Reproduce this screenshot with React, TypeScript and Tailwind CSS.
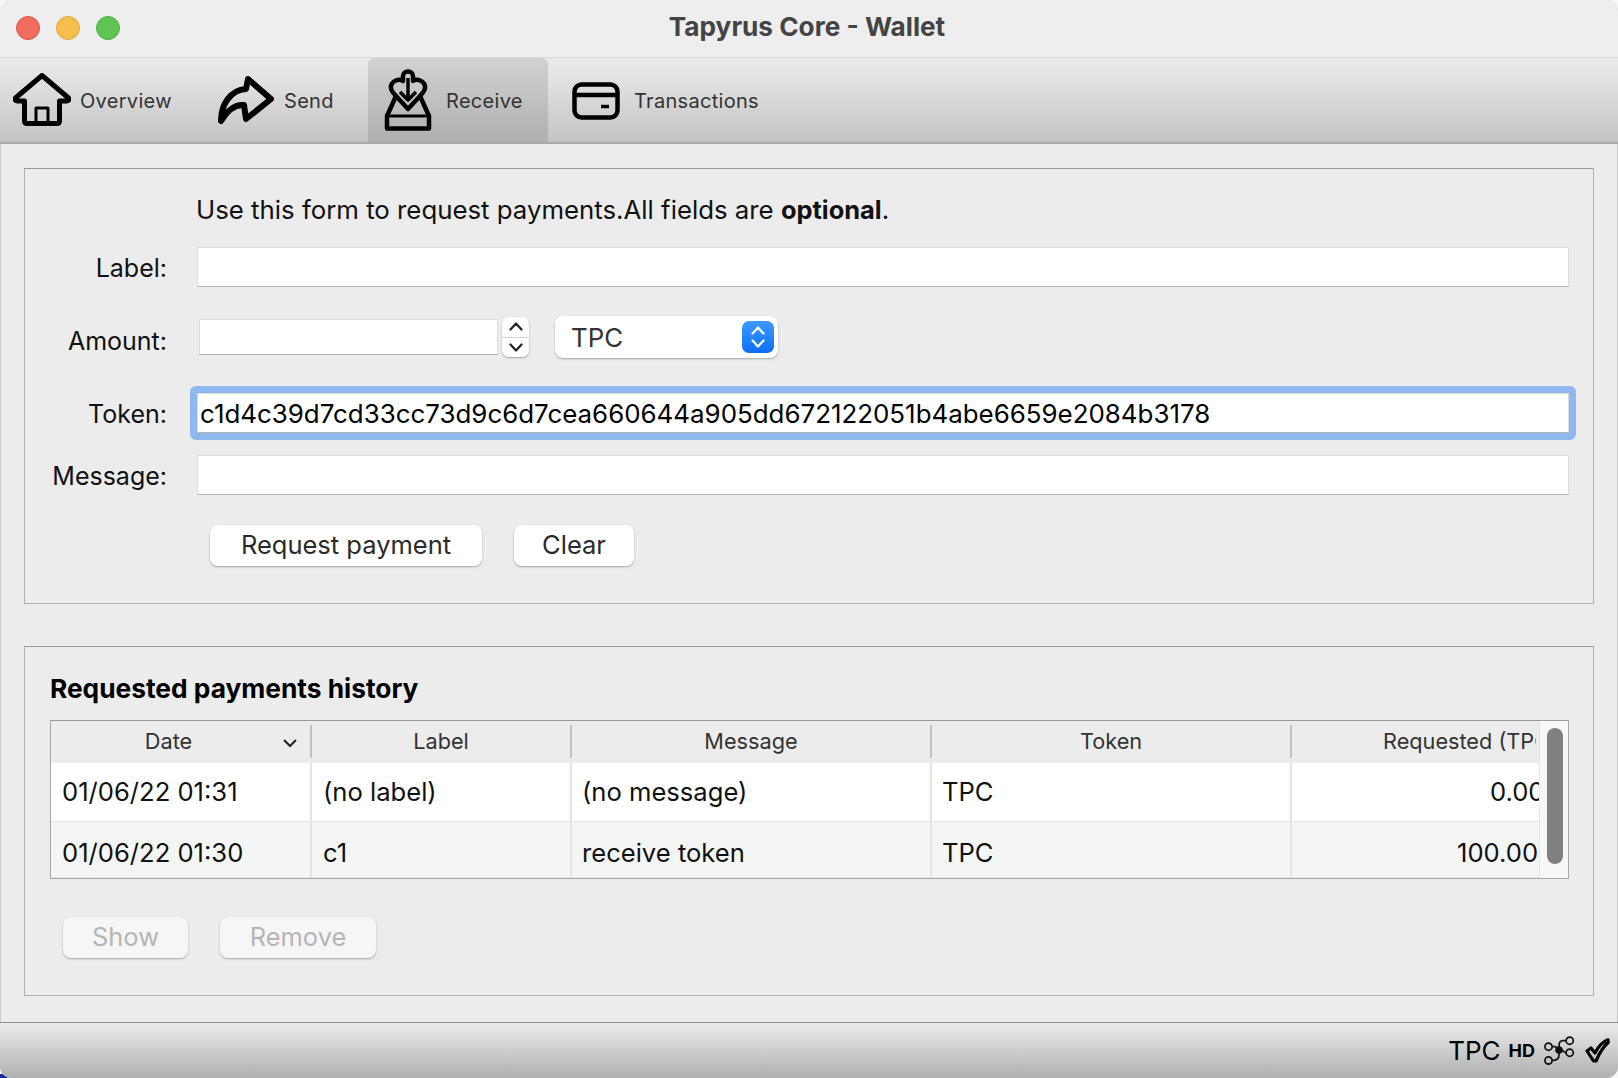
const font = "font-['Inter','Liberation_Sans',sans-serif]";

function HomeIcon() {
  return (
    <svg width="58" height="54" viewBox="0 0 58 54" fill="none" stroke="#000" strokeWidth="5" strokeLinejoin="round">
      <path d="M29 2.5 L55.5 25 Q56.5 28 54 28 L46.5 28 L46.5 48 Q46.5 50.5 44 50.5 L14 50.5 Q11.5 50.5 11.5 48 L11.5 28 L4 28 Q1.5 28 2.5 25 Z" />
      <path d="M23 50.5 L23 35 L35 35 L35 50.5" strokeWidth="3" />
    </svg>
  );
}

function SendIcon() {
  return (
    <svg width="56" height="50" viewBox="0 0 56 50" fill="none" stroke="#000" strokeWidth="6" strokeLinejoin="round">
      <path d="M30 4 L53 24 L28 44 L26 30 C17 29 9 36 3 46 C3 30 12 15 28 14 Z" />
    </svg>
  );
}

function ReceiveIcon() {
  return (
    <svg width="48" height="62" viewBox="0 0 48 62" fill="none" stroke="#000" strokeWidth="4.5" strokeLinejoin="round">
      <path d="M24 2.5 C27 2.5 29 4.5 29 7 L29 12 C33 9 40 12 41 17 C42 22 38 24 36 27 L24 40 L12 27 C10 24 6 22 7 17 C8 12 15 9 19 12 L19 7 C19 4.5 21 2.5 24 2.5 Z" />
      <path d="M24 9 L24 31 M16 23 L24 31 L32 23" strokeWidth="3.4" />
      <path d="M12 27 L3 47 L3 59.5 L45 59.5 L45 47 L36 27" />
      <path d="M3 47 L45 47" strokeWidth="3" />
    </svg>
  );
}

function CardIcon() {
  return (
    <svg className="mt-[2px]" width="48" height="38" viewBox="0 0 48 38" fill="none" stroke="#000" strokeWidth="4.5" strokeLinejoin="round">
      <rect x="2.5" y="2.5" width="43" height="33" rx="7" />
      <path d="M3 13 L45 13" />
      <path d="M29 24.5 L37 24.5" strokeWidth="3.4" />
    </svg>
  );
}

function NetworkIcon() {
  return (
    <svg width="31" height="30" viewBox="0 0 31 30" fill="none" stroke="#111" strokeWidth="1.7">
      <circle cx="25.7" cy="4.7" r="3.6" />
      <circle cx="4.5" cy="10.7" r="3.6" />
      <circle cx="25.7" cy="16.7" r="3.6" />
      <circle cx="4.5" cy="24.5" r="3.6" />
      <path d="M22.1 4.7 L19 4.7 C16 4.7 15 7 15 10 L15 19 C15 22.5 12.5 24.5 8.1 24.5" />
      <path d="M8.1 10.7 L11 10.7 C13 10.7 13 14 15 14 L17 14 C19 14 19.5 16.7 22.1 16.7" />
      <circle cx="15" cy="14" r="3.8" fill="#111" stroke="none" />
    </svg>
  );
}

function CheckIcon() {
  return (
    <svg width="25" height="25" viewBox="0 0 25 25" fill="none" stroke="#000" strokeWidth="3.2" strokeLinejoin="round">
      <path d="M2 13 L6 10 L10 15 C13 9 17 4 23 1.8 L23.2 4.5 C18 9 14 16 11 23 L8.5 23 Z" />
    </svg>
  );
}

function Chevron({ up, stroke }: { up?: boolean; stroke: string }) {
  return (
    <svg width="14" height="9" viewBox="0 0 14 9" fill="none" stroke={stroke} strokeWidth="2.2" strokeLinecap="round" strokeLinejoin="round">
      <path d={up ? "M1.5 7.5 L7 1.5 L12.5 7.5" : "M1.5 1.5 L7 7.5 L12.5 1.5"} />
    </svg>
  );
}

function ToolItem({ icon, label, className, active }: { icon: React.ReactNode; label: string; className: string; active?: boolean }) {
  return (
    <div className={`flex h-[84px] items-center ${className} ${active ? "rounded-t-[6px] bg-gradient-to-b from-[#d2d2d2] to-[#b0b0b0]" : ""}`}>
      {icon}
      <span className="pt-[2px] text-[20px] tracking-[0.3px] text-[#333]">{label}</span>
    </div>
  );
}

function FormRow({ label, className, labelClass, children }: { label: string; className: string; labelClass?: string; children: React.ReactNode }) {
  return (
    <div className={`flex items-center ${className}`}>
      <div className={`w-[142px] shrink-0 text-right text-[25px] leading-[32px] text-[#111] ${labelClass ?? "pt-[2px]"}`}>{label}</div>
      {children}
    </div>
  );
}

function TextBox({ value }: { value?: string }) {
  return (
    <div className="flex h-[40px] w-[1372px] items-center overflow-hidden border border-[#dcdcdc] border-b-[#b4b4b4] bg-white pl-[2px] pt-[2px] text-[25.9px] leading-[32px] text-black">
      {value}
    </div>
  );
}

function PushButton({ label, className, disabled }: { label: string; className: string; disabled?: boolean }) {
  return (
    <div
      className={`flex h-[41px] items-center justify-center rounded-[8px] text-[25.5px] shadow-[0_1px_2px_rgba(0,0,0,0.3)] ${
        disabled ? "bg-[#f6f6f6] text-[#b5b5b5]" : "bg-white text-[#2a2a2a]"
      } ${className}`}
    >
      {label}
    </div>
  );
}

const rows = [
  { date: "01/06/22 01:31", label: "(no label)", message: "(no message)", token: "TPC", amount: "0.00000000", pad: "pl-[198px]", bg: "bg-white", h: "h-[59px]", cell: "" },
  { date: "01/06/22 01:30", label: "c1", message: "receive token", token: "TPC", amount: "100.00000000", pad: "pl-[165px]", bg: "bg-[#f4f5f5]", h: "h-[56px]", cell: "pt-[7px]" },
];

const tableCols = "grid grid-cols-[261px_260px_360px_360px_247px]";

export default function App() {
  return (
    <div className="relative h-[1078px] w-[1618px] overflow-hidden bg-[#f7f7f7]">
      <div className="absolute bottom-0 left-0 h-[4px] w-[8px] rounded-tr-[4px] bg-[#1b2a9a]" />
      <div className={`relative flex h-full w-full flex-col overflow-hidden rounded-[12px] bg-[#ececec] shadow-[inset_0_0_0_1px_#c9c9c9] ${font}`}>
        {/* title bar */}
        <div className="relative flex h-[58px] shrink-0 items-center justify-center border-b border-[#d8d8d8] bg-[#eeeeee] pr-[4px]">
          <div className="absolute left-[16px] top-[16px] flex gap-[16px]">
            <div className="h-[24px] w-[24px] rounded-full border border-[#e0534a] bg-[#f26c60]" />
            <div className="h-[24px] w-[24px] rounded-full border border-[#e0a63c] bg-[#f6bd4f]" />
            <div className="h-[24px] w-[24px] rounded-full border border-[#4fae45] bg-[#60c453]" />
          </div>
          <span className="pb-[3px] text-[26.2px] font-bold text-[#444]">Tapyrus Core - Wallet</span>
        </div>

        {/* toolbar */}
        <div className="flex h-[86px] shrink-0 border-b-[2px] border-[#a9a9a9] bg-gradient-to-b from-[#ececec] to-[#c4c4c4]">
          <ToolItem className="w-[190px] gap-[9px] pl-[13px]" icon={<HomeIcon />} label="Overview" />
          <ToolItem className="w-[178px] gap-[10px] pl-[28px]" icon={<SendIcon />} label="Send" />
          <ToolItem className="w-[180px] gap-[14px] pl-[16px]" icon={<ReceiveIcon />} label="Receive" active />
          <ToolItem className="gap-[14px] pl-[24px]" icon={<CardIcon />} label="Transactions" />
        </div>

        <div className="flex flex-1 flex-col px-[24px] pt-[24px]">
          {/* request form */}
          <div className="h-[436px] w-[1570px] border-[1.5px] border-[#b0b0b0] border-t-[#999]">
            <div className="ml-[171px] mt-[21px] flex h-[40px] items-center text-[25.8px] text-[#111]">
              <span>
                Use this form to request payments.All fields are <b className="text-[25.4px]">optional</b>.
              </span>
            </div>
            <FormRow label="Label:" className="mt-[17px]">
              <div className="ml-[30px]">
                <TextBox />
              </div>
            </FormRow>
            <FormRow label="Amount:" className="mt-[29px] h-[42px]" labelClass="pt-[8px]">
              <div className="ml-[32px] h-[36px] w-[299px] border border-[#dcdcdc] border-b-[#b4b4b4] bg-white" />
              <div className="ml-[4px] flex h-[40px] w-[27px] flex-col rounded-[7px] bg-white shadow-[0_1px_2px_rgba(0,0,0,0.3)]">
                <div className="flex flex-1 items-center justify-center border-b border-[#d4d4d4]">
                  <Chevron up stroke="#222" />
                </div>
                <div className="flex flex-1 items-center justify-center">
                  <Chevron stroke="#222" />
                </div>
              </div>
              <div className="ml-[26px] flex h-[42px] w-[223px] items-center justify-between rounded-[8px] bg-white pl-[16px] pr-[4px] text-[25.9px] text-[#333] shadow-[0_1px_2px_rgba(0,0,0,0.3)]">
                <span className="pt-[3px]">TPC</span>
                <div className="flex h-[32px] w-[32px] flex-col items-center justify-center gap-[4px] rounded-[7px] bg-gradient-to-b from-[#3b9bff] to-[#0a6ef5]">
                  <Chevron up stroke="#fff" />
                  <Chevron stroke="#fff" />
                </div>
              </div>
            </FormRow>
            <FormRow label="Token:" className="mt-[28px]">
              <div className="ml-[23px] rounded-[6px] border-[7px] border-[#8fb8ee] bg-[#8fb8ee]">
                <TextBox value="c1d4c39d7cd33cc73d9c6d7cea660644a905dd672122051b4abe6659e2084b3178" />
              </div>
            </FormRow>
            <FormRow label="Message:" className="mt-[15px]">
              <div className="ml-[30px]">
                <TextBox />
              </div>
            </FormRow>
            <div className="ml-[185px] mt-[30px] flex gap-[32px]">
              <PushButton label="Request payment" className="w-[272px]" />
              <PushButton label="Clear" className="w-[120px]" />
            </div>
          </div>

          {/* history */}
          <div className="mt-[42px] h-[350px] w-[1570px] border-[1.5px] border-[#b0b0b0] border-t-[#999] pl-[25px]">
            <div className="mt-[26px] text-[26.3px] font-bold leading-[32px] text-black">Requested payments history</div>
            <div className="relative mt-[15px] h-[159px] w-[1519px] overflow-hidden border-[1.5px] border-[#a8a8a8] border-t-[#999] bg-[#ececec]">
              <div className={`${tableCols} h-[42px] pb-[2px] text-[21.7px] text-[#333]`}>
                <div className="relative my-[4px] flex items-center justify-center border-r-2 border-[#c0c0c0] pr-[24px]">
                  Date
                  <svg className="absolute right-[13px] top-[13px]" width="14" height="10" viewBox="0 0 14 10" fill="none" stroke="#222" strokeWidth="2">
                    <path d="M1 2 L7 8 L13 2" />
                  </svg>
                </div>
                <div className="my-[4px] flex items-center justify-center border-r-2 border-[#c0c0c0]">Label</div>
                <div className="my-[4px] flex items-center justify-center border-r-2 border-[#c0c0c0]">Message</div>
                <div className="my-[4px] flex items-center justify-center border-r-2 border-[#c0c0c0]">Token</div>
                <div className="mr-[3px] flex items-center overflow-hidden whitespace-nowrap pl-[91px]">Requested (TPC)</div>
              </div>
              {rows.map((r) => (
                <div key={r.date} className={`${tableCols} ${r.h} ${r.bg} items-stretch border-b border-[#e4e4e4] text-[25.6px] text-[#111]`}>
                  <div className={`flex items-center border-r-2 border-[#e4e4e4] pl-[11px] ${r.cell}`}>{r.date}</div>
                  <div className={`flex items-center border-r-2 border-[#e4e4e4] pl-[11px] ${r.cell}`}>{r.label}</div>
                  <div className={`flex items-center border-r-2 border-[#e4e4e4] pl-[10px] ${r.cell}`}>{r.message}</div>
                  <div className={`flex items-center border-r-2 border-[#e4e4e4] pl-[10px] ${r.cell}`}>{r.token}</div>
                  <div className={`flex items-center overflow-hidden whitespace-nowrap ${r.pad} ${r.cell}`}>{r.amount}</div>
                </div>
              ))}
              <div className="absolute right-0 top-0 h-full w-[29px] border-l border-[#e6e6e6] bg-[#f8f8f8]">
                <div className="ml-[7px] mt-[7px] h-[136px] w-[16px] rounded-full bg-[#808080]" />
              </div>
            </div>
            <div className="ml-[13px] mt-[38px] flex gap-[32px]">
              <PushButton label="Show" className="w-[125px]" disabled />
              <PushButton label="Remove" className="w-[156px]" disabled />
            </div>
          </div>
        </div>

        {/* status bar */}
        <div className="flex h-[56px] shrink-0 items-center justify-end border-t border-[#8f8f8f] bg-gradient-to-b from-[#ebebeb] to-[#b0b0b0] pr-[8px]">
          <span className="mr-[8px] text-[26px] text-black">TPC</span>
          <span className="mr-[9px] text-[18px] font-bold text-black">HD</span>
          <div className="mr-[10px]">
            <NetworkIcon />
          </div>
          <CheckIcon />
        </div>
      </div>
    </div>
  );
}
